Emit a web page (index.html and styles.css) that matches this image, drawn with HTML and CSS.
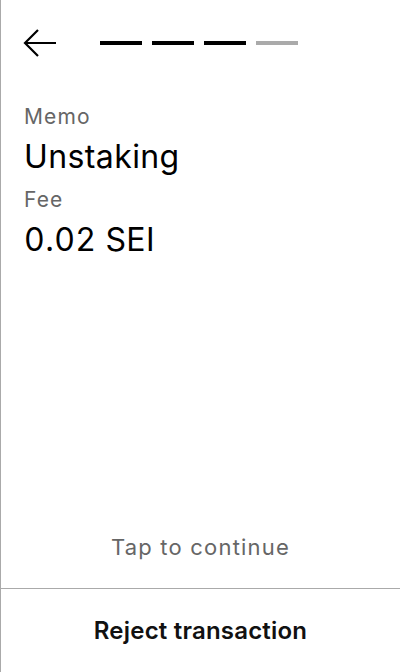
FILE: index.html
```html
<!DOCTYPE html>
<html>
<head>
<meta charset="utf-8">
<link rel="stylesheet" href="styles.css">
</head>
<body>
<div class="screen">
  <header class="header">
    <svg class="back" width="34" height="30" viewBox="0 0 34 30">
      <path d="M33 15 H2 M15 2 L2 15 L15 28" fill="none" stroke="#000" stroke-width="2.2"/>
    </svg>
    <div class="steps">
      <span class="step done"></span>
      <span class="step done"></span>
      <span class="step done"></span>
      <span class="step"></span>
    </div>
  </header>
  <main class="content">
    <div class="field">
      <div class="label">Memo</div>
      <div class="value">Unstaking</div>
    </div>
    <div class="field">
      <div class="label">Fee</div>
      <div class="value">0.02 SEI</div>
    </div>
  </main>
  <div class="tap">Tap to continue</div>
  <div class="reject">Reject transaction</div>
</div>
</body>
</html>
```
FILE: styles.css
```css
html, body {
  margin: 0;
  padding: 0;
  background: #fff;
}
body {
  font-family: Inter, "Noto Sans", sans-serif;
  color: #000;
}
.screen {
  box-sizing: border-box;
  width: 400px;
  height: 672px;
  border-left: 1px solid #aaa;
  display: flex;
  flex-direction: column;
}
.header {
  display: flex;
  align-items: center;
  height: 30px;
  margin-top: 28px;
  padding-left: 22px;
}
.back {
  display: block;
}
.steps {
  display: flex;
  gap: 10px;
  margin-left: 43px;
}
.step {
  width: 42px;
  height: 4px;
  background: #aaa;
}
.step.done {
  background: #000;
}
.content {
  flex: 1;
  padding: 46px 0 0 23px;
}
.field {
  display: flex;
  flex-direction: column;
  gap: 8px;
}
.field + .field {
  margin-top: 11px;
}
.label {
  font-size: 21px;
  line-height: 26px;
  letter-spacing: 1.1px;
  color: #666;
}
.value {
  font-size: 32px;
  line-height: 38px;
  letter-spacing: 0.4px;
  font-variant-numeric: tabular-nums;
  color: #000;
}
.tap {
  text-align: center;
  font-size: 22px;
  line-height: 26px;
  letter-spacing: 1.2px;
  color: #666;
  padding-bottom: 28px;
}
.reject {
  border-top: 1px solid #aaa;
  text-align: center;
  font-size: 24px;
  font-weight: 600;
  line-height: 30px;
  letter-spacing: 0.2px;
  color: #111;
  padding: 27px 0 26px;
}
```
